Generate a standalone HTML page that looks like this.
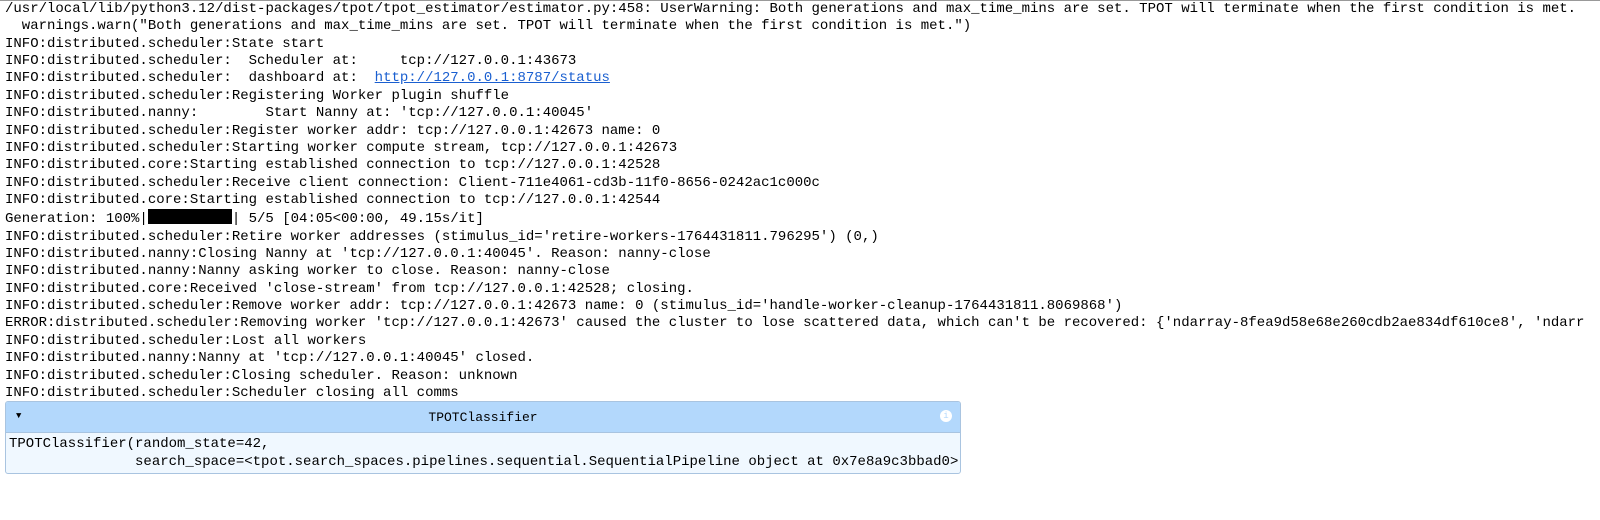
<!DOCTYPE html>
<html style="overflow:hidden;width:1600px;height:520px;"><head><style>
html,body{margin:0;padding:0;}
body{width:1600px;height:520px;background:#fff;overflow:hidden;position:relative;font-family:"Liberation Mono","DejaVu Sans Mono",monospace;}
.top{position:absolute;left:0;top:0;width:1600px;height:1px;background:#999;}
pre{position:absolute;left:5px;top:1px;width:1590px;overflow:hidden;margin:0;font:14px/17.36px "Liberation Mono",monospace;color:#000;white-space:pre;}
a{color:#1a5fd0;text-decoration:underline;}
.bar{display:inline-block;width:84px;height:15px;background:#000;vertical-align:-2px;}
.box{position:absolute;left:5px;top:401px;width:954px;height:71px;border:1px solid #a9c4e0;border-radius:3px;background:#f0f8ff;overflow:hidden;}
.hd{height:30px;background:#b3d8fc;border-bottom:1px solid #a9c4e0;position:relative;font:13px "Liberation Mono",monospace;}
.hd .t{position:absolute;left:0;right:0;top:8px;text-align:center;}
.hd .a{position:absolute;left:10px;top:9px;font-size:9px;}
.hd .i{position:absolute;right:8px;top:8px;width:12px;height:12px;border-radius:50%;background:#fff;color:#b3d8fc;font-size:9px;text-align:center;line-height:12px;}
.bd{position:absolute;left:3px;top:33px;width:950px;margin:0;font:14px/18px "Liberation Mono",monospace;white-space:pre;overflow:visible;}
</style></head><body>
<div class="top"></div>
<pre>/usr/local/lib/python3.12/dist-packages/tpot/tpot_estimator/estimator.py:458: UserWarning: Both generations and max_time_mins are set. TPOT will terminate when the first condition is met.
  warnings.warn("Both generations and max_time_mins are set. TPOT will terminate when the first condition is met.")
INFO:distributed.scheduler:State start
INFO:distributed.scheduler:  Scheduler at:     tcp://127.0.0.1:43673
INFO:distributed.scheduler:  dashboard at:  <a>http://127.0.0.1:8787/status</a>
INFO:distributed.scheduler:Registering Worker plugin shuffle
INFO:distributed.nanny:        Start Nanny at: 'tcp://127.0.0.1:40045'
INFO:distributed.scheduler:Register worker addr: tcp://127.0.0.1:42673 name: 0
INFO:distributed.scheduler:Starting worker compute stream, tcp://127.0.0.1:42673
INFO:distributed.core:Starting established connection to tcp://127.0.0.1:42528
INFO:distributed.scheduler:Receive client connection: Client-711e4061-cd3b-11f0-8656-0242ac1c000c
INFO:distributed.core:Starting established connection to tcp://127.0.0.1:42544
Generation: 100%|<span class="bar"></span>| 5/5 [04:05&lt;00:00, 49.15s/it]
INFO:distributed.scheduler:Retire worker addresses (stimulus_id='retire-workers-1764431811.796295') (0,)
INFO:distributed.nanny:Closing Nanny at 'tcp://127.0.0.1:40045'. Reason: nanny-close
INFO:distributed.nanny:Nanny asking worker to close. Reason: nanny-close
INFO:distributed.core:Received 'close-stream' from tcp://127.0.0.1:42528; closing.
INFO:distributed.scheduler:Remove worker addr: tcp://127.0.0.1:42673 name: 0 (stimulus_id='handle-worker-cleanup-1764431811.8069868')
ERROR:distributed.scheduler:Removing worker 'tcp://127.0.0.1:42673' caused the cluster to lose scattered data, which can't be recovered: {'ndarray-8fea9d58e68e260cdb2ae834df610ce8', 'ndarr
INFO:distributed.scheduler:Lost all workers
INFO:distributed.nanny:Nanny at 'tcp://127.0.0.1:40045' closed.
INFO:distributed.scheduler:Closing scheduler. Reason: unknown
INFO:distributed.scheduler:Scheduler closing all comms</pre>
<div class="box">
<div class="hd"><span class="a">▼</span><span class="t">TPOTClassifier</span><span class="i">i</span></div>
<pre class="bd">TPOTClassifier(random_state=42,
               search_space=&lt;tpot.search_spaces.pipelines.sequential.SequentialPipeline object at 0x7e8a9c3bbad0&gt;)</pre>
</div>
</body></html>
